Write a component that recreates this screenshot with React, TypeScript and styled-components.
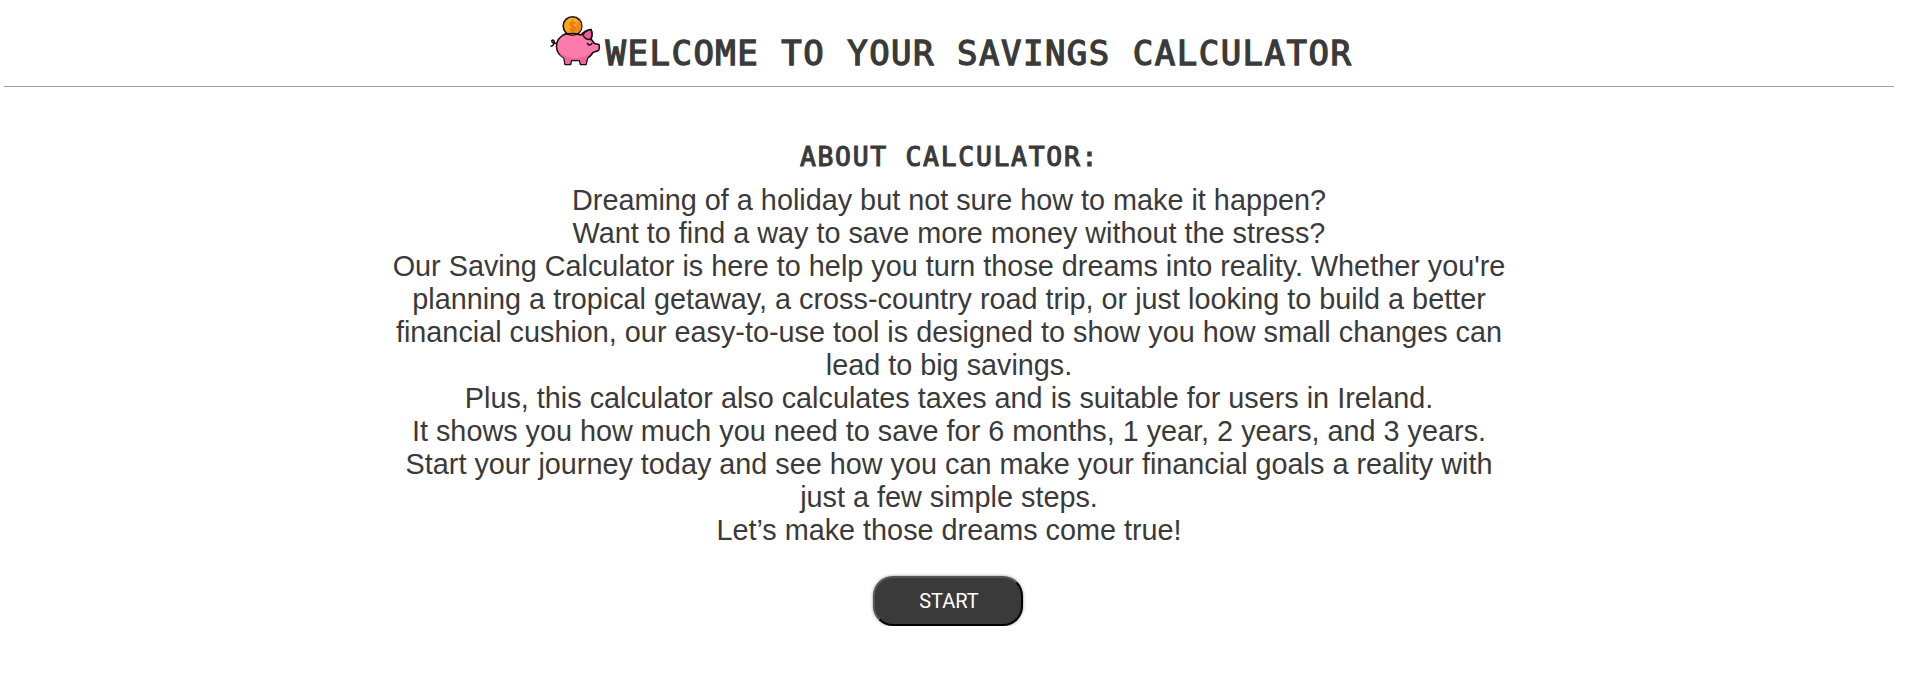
import React from "react";
import styled, { createGlobalStyle } from "styled-components";

const GlobalStyle = createGlobalStyle`
  * { box-sizing: border-box; }
  body { margin: 0; background: #fff; color: #3a3a3a; }
`;

const Page = styled.div`
  width: 1898px;
  padding: 0 4px;
`;

const Header = styled.header`
  height: 87px;
  padding: 15px 0 0 4px;
  display: flex;
  justify-content: center;
  align-items: flex-start;
  border-bottom: 1px solid #a0a0a0;
`;

const Title = styled.h1`
  margin: 15px 0 0 5px;
  font: 400 34px/46px "DejaVu Sans Mono", monospace;
  -webkit-text-stroke: 1.3px #3a3a3a;
  letter-spacing: 1.5px;
  white-space: pre;
`;

const Main = styled.main`
  display: flex;
  flex-direction: column;
  align-items: center;
`;

const Subtitle = styled.h2`
  margin: 51px 0 0;
  padding-left: 1px;
  font: 400 26.4px/38px "DejaVu Sans Mono", monospace;
  -webkit-text-stroke: 1.1px #3a3a3a;
  letter-spacing: 1.71px;
  white-space: pre;
`;

const About = styled.p`
  margin: 8px 0 0;
  font: 28.8px/33px "Liberation Sans", Arial, sans-serif;
  text-align: center;
  white-space: nowrap;
`;

const StartButton = styled.button`
  width: 150px;
  height: 50px;
  margin: 29px 2px 0 0;
  padding: 0 0 0 2px;
  border: 2px outset #000;
  border-radius: 20px;
  background: #3a3a3a;
  color: #fff;
  font: 20px Roboto, sans-serif;
  box-shadow: 0 0 3px rgba(0, 0, 0, 0.5);
`;

const lines = [
  "Dreaming of a holiday but not sure how to make it happen?",
  "Want to find a way to save more money without the stress?",
  "Our Saving Calculator is here to help you turn those dreams into reality. Whether you're",
  "planning a tropical getaway, a cross-country road trip, or just looking to build a better",
  "financial cushion, our easy-to-use tool is designed to show you how small changes can",
  "lead to big savings.",
  "Plus, this calculator also calculates taxes and is suitable for users in Ireland.",
  "It shows you how much you need to save for 6 months, 1 year, 2 years, and 3 years.",
  "Start your journey today and see how you can make your financial goals a reality with",
  "just a few simple steps.",
  "Let’s make those dreams come true!",
];

const PiggyBank = () => (
  <svg width="51" height="51" viewBox="0 0 51 51" fill="none" stroke="#171016" strokeWidth="1.6" strokeLinecap="round" strokeLinejoin="round">
    <path d="M7 28C4 29 1 27 2 25.5S5 26 4 28.5 1.5 31.500 1 31" />
    <path fill="#ff7bac" d="M16 18.500Q24 17.500 31 20Q34 15.500 41 14.500Q43 19 41 24L44.500 28.500L49 29.500Q50 33 48.500 35.500L43 37.500Q40 42 37.500 43L36 49.500H30.500L29.500 45.500H21.500L20.500 49.500H15L14 43Q7 39 6.500 32Q6 23 16 18.500Z" />
    <path stroke="none" fill="#ef659b" d="M8 35Q14 43 25 43Q35 43 41 38L37 43L35.500 49H31L30 45H21L20 49H15.500L14.500 43Q9 40 8 35Z" />
    <path fill="#f45c98" d="M33 20Q35 15.500 41 14.500Q43 20 40.500 24.500Q35 25 33 20Z" />
    <path d="M37.500 28.500Q39.500 31.500 42 28.500" />
    <circle cx="22.500" cy="11" r="9.300" fill="#ffa61f" />
    <path stroke="none" fill="#f58a1b" d="M29 5A8.600 8.600 0 0 1 16.500 17Q25 16 29 5Z" />
    <path stroke="#e27712" strokeWidth="1.500" d="M25 8.500C23.500 6.500 20 7 20 9.200S25.300 11 25.300 13.200 21.500 15.800 19.800 13.500M22.500 6V16.500" />
    <path d="M16 19.200Q23 17.800 29 19.200" />
  </svg>
);

export default function App() {
  return (
    <Page>
      <GlobalStyle />
      <Header>
        <PiggyBank />
        <Title>WELCOME TO YOUR SAVINGS CALCULATOR</Title>
      </Header>
      <Main>
        <Subtitle>ABOUT CALCULATOR:</Subtitle>
        <About>
          {lines.map((line) => (
            <React.Fragment key={line}>
              {line}
              <br />
            </React.Fragment>
          ))}
        </About>
        <StartButton>START</StartButton>
      </Main>
    </Page>
  );
}
